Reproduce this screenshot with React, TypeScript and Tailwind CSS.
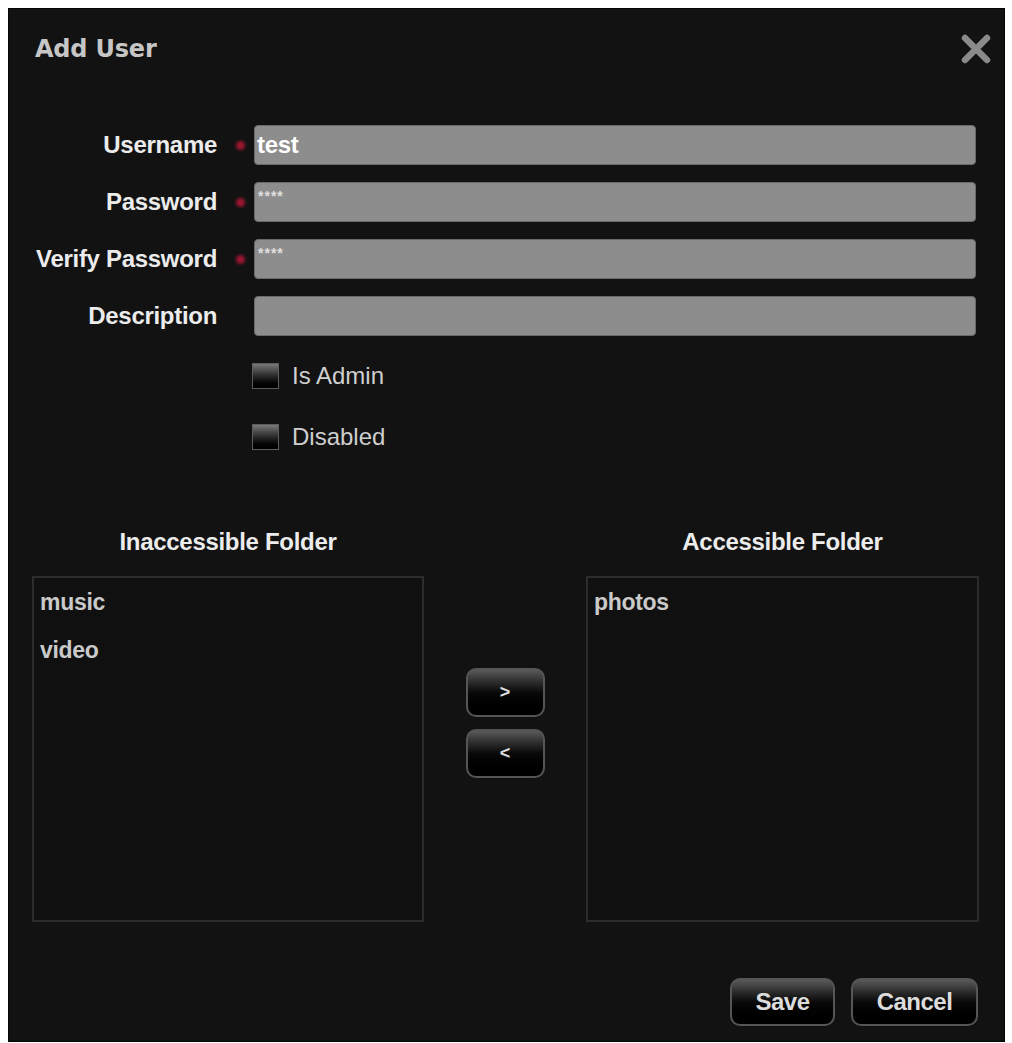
const sans = { fontFamily: '"Liberation Sans", Arial, sans-serif' }

function Field({ label, required, value, masked }: { label: string; required?: boolean; value?: string; masked?: boolean }) {
  return (
    <div className="flex h-[40px] items-center">
      <div className="w-[208px] text-right text-[24px] font-bold leading-none tracking-[-0.3px] text-[#ececec]">{label}</div>
      <div className="flex w-[37px] items-center">
        {required && <span className="ml-[19px] h-[9px] w-[9px] rounded-full bg-[#9a1630] blur-[1.5px]" />}
      </div>
      <div className="h-[40px] w-[722px] rounded-[4px] border border-[#6a6a6a] bg-[#8d8d8d]">
        {masked ? (
          <div className="pl-[3px] pt-[6px] text-[14px] font-bold leading-none tracking-[1px] text-[#e0e0e0]">{value}</div>
        ) : (
          <div className="pl-[2px] text-[24px] font-bold leading-[38px] tracking-[-0.3px] text-white">{value}</div>
        )}
      </div>
    </div>
  )
}

function Check({ label }: { label: string }) {
  return (
    <div className="flex h-[26px] items-center gap-[13px]">
      <div className="h-[26px] w-[27px] border border-[#5c5c5c] bg-gradient-to-b from-[#7a7a7a] via-[#2a2a2a] to-black" />
      <span className="text-[24px] leading-none text-[#cfcfcf]">{label}</span>
    </div>
  )
}

function GlossButton({ children, w, h, small }: { children: React.ReactNode; w: string; h: string; small?: boolean }) {
  return (
    <button
      className={`${w} ${h} flex items-center justify-center rounded-[10px] border-2 border-[#555] bg-gradient-to-b from-[#5a5a5a] via-[#0a0a0a] via-50% to-black font-bold text-[#dcdcdc] ${
        small ? "text-[18px]" : "text-[24px] tracking-[-0.5px]"
      }`}
    >
      {children}
    </button>
  )
}

function FolderBox({ title, items, w }: { title: string; items: string[]; w: string }) {
  return (
    <div className={`flex ${w} flex-col`}>
      <div className="h-[28px] text-center text-[24px] font-bold leading-[28px] tracking-[-0.3px] text-[#ececec]">{title}</div>
      <div className="mt-[20px] h-[346px] border-2 border-[#2c2c2c] bg-[#101010] pl-[6px]">
        {items.map((it) => (
          <div key={it} className="h-[48px] text-[23px] font-bold leading-[48px] tracking-[-0.3px] text-[#cacaca]">
            {it}
          </div>
        ))}
      </div>
    </div>
  )
}

export default function App() {
  return (
    <div className="min-h-screen bg-white pt-2" style={sans}>
      <div className="ml-2 flex h-[1034px] w-[997px] flex-col border border-[#050505] bg-[#121212]">
        {/* Header */}
        <div className="mt-[24px] flex h-[32px] items-center justify-between pl-[26px] pr-[12px]">
          <h1
            className="text-[24px] font-bold leading-none tracking-[-0.2px] text-[#c6c6c6]"
            style={{ fontFamily: '"DejaVu Sans", Verdana, sans-serif' }}
          >
            Add User
          </h1>
          <svg width="32" height="32" viewBox="0 0 32 32">
            <path d="M5 5 L27 27 M27 5 L5 27" stroke="#8a8a8a" strokeWidth="6.5" strokeLinecap="round" />
          </svg>
        </div>

        {/* Fields */}
        <div className="mt-[60px] flex flex-col gap-[17px]">
          <Field label="Username" required value="test" />
          <Field label="Password" required value="****" masked />
          <Field label="Verify Password" required value="****" masked />
          <Field label="Description" />
        </div>

        <div className="mt-[27px] flex flex-col gap-[35px] pl-[243px]">
          <Check label="Is Admin" />
          <Check label="Disabled" />
        </div>

        {/* Folders */}
        <div className="mt-[78px] flex pl-[23px]">
          <FolderBox title="Inaccessible Folder" items={["music", "video"]} w="w-[392px]" />
          <div className="flex w-[162px] flex-col items-center pt-[140px]">
            <div className="flex flex-col gap-[12px]">
              <GlossButton w="w-[79px]" h="h-[49px]" small>
                &gt;
              </GlossButton>
              <GlossButton w="w-[79px]" h="h-[49px]" small>
                &lt;
              </GlossButton>
            </div>
          </div>
          <FolderBox title="Accessible Folder" items={["photos"]} w="w-[393px]" />
        </div>

        {/* Footer */}
        <div className="mt-[56px] flex justify-end gap-[16px] pr-[26px]">
          <GlossButton w="w-[105px]" h="h-[48px]">
            Save
          </GlossButton>
          <GlossButton w="w-[127px]" h="h-[48px]">
            Cancel
          </GlossButton>
        </div>
      </div>
    </div>
  )
}
